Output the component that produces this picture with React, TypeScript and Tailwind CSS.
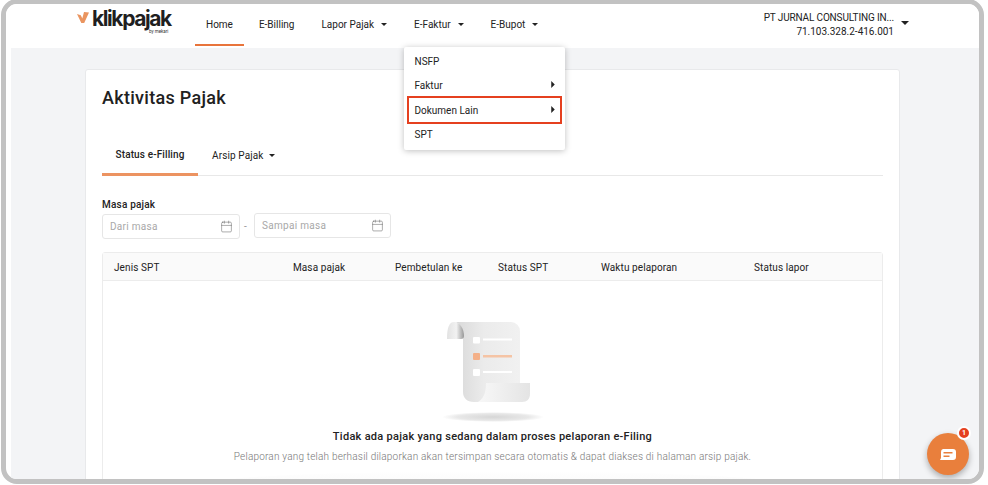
import { Calendar } from "lucide-react"

const font = { fontFamily: "Roboto, sans-serif" }

function CaretDown({ className = "" }: { className?: string }) {
  return (
    <svg viewBox="0 0 8 4" className={`h-[3px] w-[6px] shrink-0 text-[#222] ${className}`} fill="currentColor">
      <path d="M0 0h8L4 4z" />
    </svg>
  )
}

function CaretRight() {
  return (
    <svg viewBox="0 0 4 8" className="-mt-[2px] h-[7px] w-[4px] text-[#222]" fill="currentColor">
      <path d="M0 0l4 4-4 4z" />
    </svg>
  )
}

function Logo() {
  return (
    <div className="relative ml-[71px] h-[30px] w-[96px] shrink-0">
      <div className="flex items-start pt-[6px]">
        <svg viewBox="0 0 12 11" className="mt-[2px] h-[11px] w-[12px] shrink-0">
          <path d="M0 2L3.800 3.200L5.300 6.500L7 0L12 0.500L7.200 11H4.300z" fill="#ea9560" />
        </svg>
        <span className="ml-[3px] text-[21px] font-bold leading-[18px] tracking-[-1.4px] text-[#1f1f1f]" style={{ fontFamily: "Inter, sans-serif" }}>
          klikpajak
        </span>
      </div>
      <span className="absolute left-[72px] top-[25px] text-[4.500px] leading-[5px] text-[#333]">by mekari</span>
    </div>
  )
}

function NavItem({ label, caret, active }: { label: string; caret?: boolean; active?: boolean }) {
  return (
    <div className={`flex h-[42px] items-center gap-[7px] border-b-2 px-[11px] ${active ? "border-[#e8743b]" : "border-transparent"}`}>
      <span>{label}</span>
      {caret && <CaretDown />}
    </div>
  )
}

function DateField({ label, className = "" }: { label: string; className?: string }) {
  return (
    <div className={`flex h-[25px] w-[138px] items-center justify-between rounded-[3px] border border-[#e6e6e6] bg-white pl-[7px] pr-[6px] text-[10px] tracking-[0.3px] text-[#a8a8a8] ${className}`}>
      <span>{label}</span>
      <Calendar size={13} strokeWidth={1} className="text-[#666]" />
    </div>
  )
}

function EmptyIllustration() {
  return (
    <svg viewBox="0 0 102 100" className="h-[100px] w-[102px]">
      <defs>
        <linearGradient id="paper" x1="0" y1="0" x2="1" y2="0">
          <stop offset="0" stopColor="#d8d8d8" />
          <stop offset="0.45" stopColor="#ebebeb" />
          <stop offset="1" stopColor="#f1f1f1" />
        </linearGradient>
        <linearGradient id="curlTop" x1="0" y1="0" x2="1" y2="0">
          <stop offset="0" stopColor="#e2e2e2" />
          <stop offset="0.55" stopColor="#f2f2f2" />
          <stop offset="1" stopColor="#979797" />
        </linearGradient>
        <linearGradient id="curlBottom" x1="0" y1="0" x2="1" y2="0">
          <stop offset="0" stopColor="#f8f8f8" />
          <stop offset="1" stopColor="#e4e4e4" />
        </linearGradient>
        <radialGradient id="floor">
          <stop offset="0" stopColor="#d6d6d6" />
          <stop offset="0.7" stopColor="#e8e8e8" />
          <stop offset="1" stopColor="#ffffff" />
        </radialGradient>
      </defs>
      <ellipse cx="51" cy="95" rx="51" ry="5" fill="url(#floor)" />
      <path d="M12 0h57a9 9 0 0 1 9 9v71H32c-7 0-11-4-11-10V14C21 7 18 0 12 0z" fill="url(#paper)" />
      <path d="M12 0C7 0 5 6 5 17h14c2 0 3-1 3-3 0-7-4-14-10-14z" fill="url(#curlTop)" />
      <path d="M44 61h44v11c0 5-3 8-8 8H36c5-3 8-8 8-19z" fill="url(#curlBottom)" />
      <rect x="31" y="15" width="7" height="6.500" rx="1" fill="#fff" />
      <rect x="41" y="16.500" width="29" height="2" fill="#fff" />
      <rect x="31" y="31" width="7" height="7" rx="1" fill="#f4b088" />
      <rect x="41" y="33" width="29" height="2.500" fill="#f5c4a5" />
      <rect x="31" y="47" width="7" height="7" rx="1" fill="#fff" />
      <rect x="41" y="49" width="29" height="2" fill="#fff" />
    </svg>
  )
}

export default function App() {
  return (
    <div className="relative h-[485px] w-[988px] overflow-hidden bg-white text-[#222]" style={font}>
      <div className="relative -mt-px ml-px flex h-[485px] w-[983px] flex-col overflow-hidden rounded-[16px] border-[5px] border-[#c2c2c2] bg-white">
        {/* Header */}
        <header className="flex h-[44px] shrink-0 items-start bg-white text-[10px]">
          <Logo />
          <nav className="ml-[22px] flex items-start">
            <NavItem label="Home" active />
            <div className="w-[4px]" />
            <NavItem label="E-Billing" />
            <div className="w-[5px]" />
            <NavItem label="Lapor Pajak" caret />
            <div className="w-[5px]" />
            <NavItem label="E-Faktur" caret />
            <div className="w-[5px]" />
            <NavItem label="E-Bupot" caret />
          </nav>
          <div className="ml-auto mr-[70px] flex items-start gap-[7px] pt-[7px]">
            <div className="text-right leading-[13.500px]">
              <div className="tracking-[-0.15px]">PT JURNAL CONSULTING IN...</div>
              <div>71.103.328.2-416.001</div>
            </div>
            <CaretDown className="mt-[10px] !h-[4px] !w-[8px]" />
          </div>
        </header>

        {/* Page */}
        <main className="ml-[5px] flex-1 overflow-hidden bg-[#f3f4f6] pl-[74px] pr-[79px] pt-[21px]">
          <div className="h-[500px] rounded-[3px] border border-[#e8e9eb] bg-white px-[16px]">
            <h1 className="mt-[16px] text-[18px] font-medium leading-[24px] tracking-[0.3px] text-[#212121]">Aktivitas Pajak</h1>

            <div className="mt-[30px] flex h-[36px] items-stretch border-b border-[#e8e8e8] text-[10px] tracking-[0.12px]">
              <div className="-mb-px flex w-[96px] items-center justify-center border-b-[3px] border-[#ec9361] pb-[4px] font-medium">Status e-Filling</div>
              <div className="flex items-center gap-[5px] pb-[4px] pl-[14px]">
                <span>Arsip Pajak</span>
                <CaretDown />
              </div>
            </div>

            <div className="mt-[22px] text-[10px] font-medium leading-[14px] tracking-[0.2px]">Masa pajak</div>
            <div className="mt-[2px] flex items-center">
              <DateField label="Dari masa" />
              <span className="ml-[4px] mr-[6px] w-[4px] text-[10px] text-[#999]">-</span>
              <DateField label="Sampai masa" className="-mt-[2px] !w-[137px]" />
            </div>

            <div className="mt-[13px] rounded-t-[3px] border border-[#ececec]">
              <div className="flex h-[28px] items-center border-b border-[#ececec] bg-[#fafafa] pt-[1px] text-[10px] tracking-[0.1px]">
                <span className="w-[190px] pl-[11px]">Jenis SPT</span>
                <span className="w-[102px]">Masa pajak</span>
                <span className="w-[103px]">Pembetulan ke</span>
                <span className="w-[103px]">Status SPT</span>
                <span className="w-[153px]">Waktu pelaporan</span>
                <span>Status lapor</span>
              </div>
              <div className="flex h-[220px] flex-col items-center pt-[41px]">
                <EmptyIllustration />
                <div className="mt-[8px] text-[11px] font-medium leading-[14px] tracking-[0.28px] text-[#222]">
                  Tidak ada pajak yang sedang dalam proses pelaporan e-Filing
                </div>
                <div className="mt-[6px] text-[10px] font-light leading-[14px] tracking-[0.2px] text-[#777]">
                  Pelaporan yang telah berhasil dilaporkan akan tersimpan secara otomatis &amp; dapat diakses di halaman arsip pajak.
                </div>
                <div className="mt-[7px] h-[30px] w-[600px] rounded-t-[50%] bg-gradient-to-b from-white to-[#f4f4f4]" />
              </div>
            </div>
          </div>
        </main>

        {/* Dropdown */}
        <div className="absolute left-[398px] top-[43px] z-10 w-[161px] rounded-[2px] bg-white pb-[3px] pt-[2px] text-[10px] shadow-[0_1px_6px_rgba(0,0,0,0.25)]">
          <div className="flex h-[24.500px] items-center px-[10.500px]">NSFP</div>
          <div className="flex h-[24.500px] items-center justify-between pl-[10.500px] pr-[10px]">
            <span>Faktur</span>
            <CaretRight />
          </div>
          <div className="relative flex h-[24.500px] items-center justify-between pl-[10.500px] pr-[10px]">
            <span>Dokumen Lain</span>
            <CaretRight />
            <div className="absolute inset-x-[3px] -bottom-px -top-[2px] border-2 border-[#e5401f]" />
          </div>
          <div className="flex h-[24.500px] items-center px-[10.500px]">SPT</div>
        </div>

        {/* Chat button */}
        <div className="absolute left-[921px] top-[429px] z-10 flex h-[42px] w-[42px] items-center justify-center rounded-full bg-[#e97f3c] shadow-[0_3px_6px_rgba(0,0,0,0.3)]">
          <svg viewBox="0 0 16 11" className="h-[11px] w-[16px]">
            <path d="M3 0h10a3 3 0 0 1 3 3v5a3 3 0 0 1-3 3H0l1-2V3a3 3 0 0 1 2-3z" fill="#fff" />
            <rect x="3.500" y="3" width="9" height="1.500" fill="#e97f3c" />
            <rect x="3.500" y="6.500" width="6" height="1.500" fill="#e97f3c" />
          </svg>
          <div className="absolute -right-[2px] -top-[7px] flex h-[14px] w-[14px] items-center justify-center rounded-full border-2 border-white bg-[#e5401f] text-[7px] font-bold leading-none text-white">
            1
          </div>
        </div>
      </div>
    </div>
  )
}
